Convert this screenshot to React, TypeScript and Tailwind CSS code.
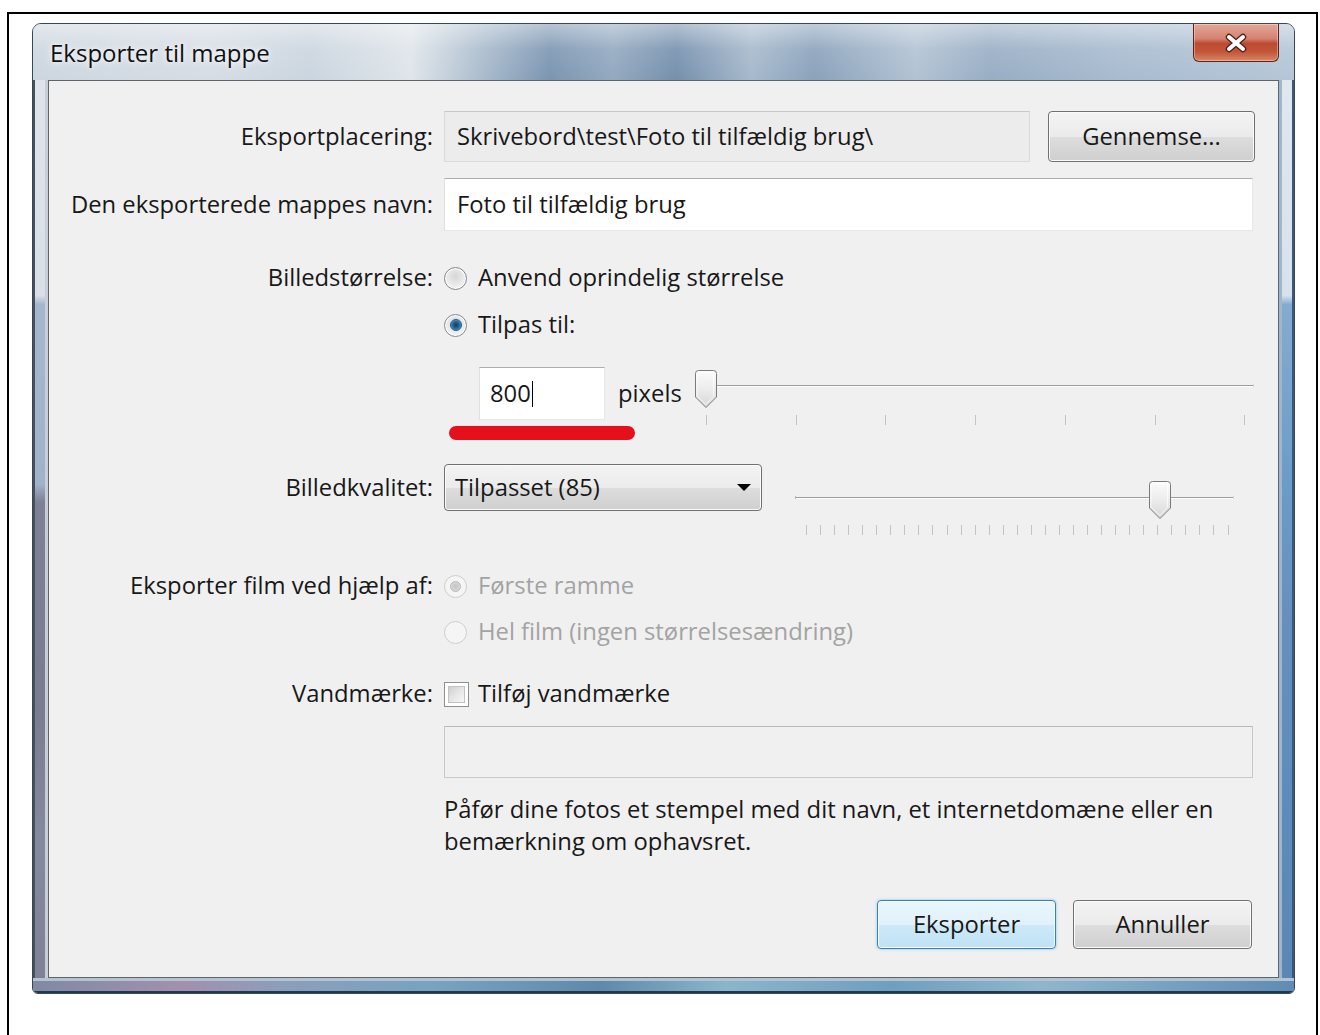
import type { ReactNode } from "react";

// Vista style radio button
function Radio({ checked, disabled }: { checked?: boolean; disabled?: boolean }) {
  if (disabled) {
    return (
      <span className="flex h-[23px] w-[23px] shrink-0 items-center justify-center rounded-full border border-[#cdcdcd] bg-[#f5f5f5]">
        {checked && (
          <span className="h-[11px] w-[11px] rounded-full border border-[#b8b8b8] bg-[radial-gradient(circle_at_50%_45%,#c4c4c4_0%,#d8d8d8_70%,#e6e6e6_100%)]" />
        )}
      </span>
    );
  }
  return (
    <span className="flex h-[23px] w-[23px] shrink-0 items-center justify-center rounded-full border border-[#85878a] bg-[radial-gradient(circle_at_50%_40%,#d6d6d6_0%,#e9e9e9_50%,#ffffff_100%)] shadow-[inset_0_0_0_1px_#ffffff]">
      {checked && (
        <span className="h-[12px] w-[12px] rounded-full border border-[#1d5a86] bg-[radial-gradient(circle_at_50%_50%,#17395c_0%,#276a9a_50%,#7ccaf0_100%)]" />
      )}
    </span>
  );
}

function Checkbox() {
  return (
    <span className="flex h-[25px] w-[25px] shrink-0 items-center justify-center border border-[#8e8f8f] bg-white">
      <span className="h-[17px] w-[17px] border border-[#c2c2c2] bg-[linear-gradient(135deg,#cfcfcf_0%,#e6e6e6_50%,#f7f7f7_100%)]" />
    </span>
  );
}

// slider thumb pointing down, drawn at (x, y) top-left
function Thumb({ x, y }: { x: number; y: number }) {
  return (
    <g transform={`translate(${x} ${y})`}>
      <path
        d="M3.5 0.5 H18.5 A3 3 0 0 1 21.5 3.5 V27 L11 37.5 L0.5 27 V3.5 A3 3 0 0 1 3.5 0.5 Z"
        fill="url(#thumbFill)"
        stroke="#7b7b7b"
        strokeWidth="1"
      />
      <path d="M3.5 2 H18.5 V26 L11 34.5 L2 26 V3.5" fill="none" stroke="#ffffff" strokeOpacity="0.7" />
    </g>
  );
}

function Slider({
  width,
  height,
  trackY,
  trackFrom,
  trackTo,
  thumbX,
  thumbY,
  ticks,
  tickY,
  tickH,
}: {
  width: number;
  height: number;
  trackY: number;
  trackFrom: number;
  trackTo: number;
  thumbX: number;
  thumbY: number;
  ticks: number[];
  tickY: number;
  tickH: number;
}) {
  return (
    <svg width={width} height={height} className="block overflow-visible">
      <defs>
        <linearGradient id="thumbFill" x1="0" y1="0" x2="0" y2="1">
          <stop offset="0" stopColor="#fbfbfb" />
          <stop offset="0.5" stopColor="#ececec" />
          <stop offset="1" stopColor="#d6d6d6" />
        </linearGradient>
      </defs>
      {ticks.map((t) => (
        <line key={t} x1={t + 0.5} x2={t + 0.5} y1={tickY} y2={tickY + tickH} stroke="#c4c4c4" strokeWidth="1" />
      ))}
      <line x1={trackFrom} x2={trackTo} y1={trackY + 0.5} y2={trackY + 0.5} stroke="#9c9c9c" strokeWidth="1" />
      <line x1={trackFrom} x2={trackTo} y1={trackY + 1.5} y2={trackY + 1.5} stroke="#ffffff" strokeWidth="1" />
      <line x1={trackFrom + 0.5} x2={trackFrom + 0.5} y1={trackY - 1} y2={trackY + 2} stroke="#b8b8b8" />
      <line x1={trackTo - 0.5} x2={trackTo - 0.5} y1={trackY - 1} y2={trackY + 2} stroke="#d6d6d6" />
      <Thumb x={thumbX} y={thumbY} />
    </svg>
  );
}

function Row({ label, children, className }: { label?: string; children: ReactNode; className: string }) {
  return (
    <div className={`grid grid-cols-[384px_1fr] items-center gap-x-[11px] ${className}`}>
      <div className="whitespace-nowrap text-right">{label}</div>
      <div className="flex h-full items-center">{children}</div>
    </div>
  );
}

const sizeTicks = Array.from({ length: 7 }, (_, i) => Math.round(13 + i * 89.7));
const qualityTicks = Array.from({ length: 31 }, (_, i) => Math.round(20 + i * 14.05));

const grayButton =
  "flex items-center justify-center rounded-[4px] border border-[#707070] bg-[linear-gradient(180deg,#f3f3f3_0%,#ebebeb_50%,#dddddd_51%,#cfcfcf_100%)] shadow-[inset_0_0_0_1px_#fbfbfb]";

export default function App() {
  return (
    <div className="h-[1035px] w-[1320px] overflow-hidden bg-white font-['Open_Sans','Noto_Sans',sans-serif] text-[23.8px] leading-none text-[#181818]">
      <div className="ml-[7px] mt-[12px] h-[1040px] w-[1311px] border-2 border-b-0 border-black pl-[23px] pt-[9px]">
        {/* window */}
        <div className="flex h-[971px] w-[1263px] flex-col overflow-hidden rounded-t-[9px] rounded-b-[6px] border border-[#36475a] bg-[#a9bbce]">
          {/* title bar */}
          <div className="flex h-[56px] shrink-0 items-start bg-[linear-gradient(180deg,rgba(255,255,255,0.45)_0%,rgba(255,255,255,0.1)_45%,rgba(255,255,255,0)_100%),linear-gradient(90deg,#cdd6df_0%,#d6dde5_14%,#cbd5df_22%,#dfe5ea_30%,#a7b9cb_36%,#7b95b1_41%,#93a9c0_46%,#7590ad_51%,#a7b9cc_57%,#8aa2bb_62%,#b2c2d3_70%,#98adc4_76%,#a8bbcf_86%,#b5c6d7_100%)]">
            <div className="pl-[17px] pt-[15px] text-[24px] leading-[28px] text-[#111] [text-shadow:0_0_10px_rgba(255,255,255,0.95),0_0_4px_rgba(255,255,255,0.8)]">
              Eksporter til mappe
            </div>
            <div className="ml-auto mr-[15px] flex h-[38px] w-[86px] items-center justify-center rounded-b-[6px] border border-t-0 border-[#5c241c] bg-[linear-gradient(180deg,#e3a797_0%,#d48270_40%,#bd4a31_52%,#c2553a_75%,#db8762_100%)] shadow-[inset_0_0_0_1px_rgba(255,255,255,0.35)]">
              <svg width="24" height="20" viewBox="0 0 24 20">
                <path d="M5 4 L19 16 M19 4 L5 16" stroke="#4f2019" strokeWidth="6.5" strokeLinecap="round" />
                <path d="M5 4 L19 16 M19 4 L5 16" stroke="#ffffff" strokeWidth="4" strokeLinecap="round" />
              </svg>
            </div>
          </div>

          <div className="flex flex-1">
            {/* left frame */}
            <div className="w-[15px] shrink-0 bg-[linear-gradient(180deg,#dfe4eb_0%,#d9dfe7_24%,#a3b7ce_25%,#9fb4cb_45%,#7e8196_47%,#7a7c90_70%,#868a9e_85%,#7f8296_100%)] shadow-[inset_-3px_0_0_#c9ced6,inset_2px_0_0_#4a4f5c]" />

            {/* client area */}
            <div className="flex flex-1 flex-col border border-[#5f646b] bg-[#f0f0f0] pr-[25px]">
              <Row label="Eksportplacering:" className="mt-[30px] h-[51px]">
                <div className="flex h-full w-[586px] items-center border border-[#dadada] border-t-[#c8c8c8] bg-[#ececec] pl-[12px]">
                  Skrivebord\test\Foto til tilfældig brug\
                </div>
                <button className={`ml-auto mr-[-2px] h-[51px] w-[207px] ${grayButton}`}>Gennemse...</button>
              </Row>

              <Row label="Den eksporterede mappes navn:" className="mt-[16px] h-[53px]">
                <div className="flex h-full w-full items-center border border-[#e3e9ef] border-l-[#dbdfe6] border-t-[#abadb3] bg-white pl-[12px]">
                  Foto til tilfældig brug
                </div>
              </Row>

              <Row label="Billedstørrelse:" className="mt-[30px] h-[34px]">
                <Radio />
                <span className="ml-[11px]">Anvend oprindelig størrelse</span>
              </Row>

              <Row className="mt-[13px] h-[34px]">
                <Radio checked />
                <span className="ml-[11px]">Tilpas til:</span>
              </Row>

              <Row className="mt-[25px] h-[53px]">
                <div className="ml-[35px] flex h-[53px] w-[126px] items-center border border-[#e3e9ef] border-l-[#dbdfe6] border-t-[#abadb3] bg-white pl-[10px]">
                  800
                  <span className="ml-[1px] h-[26px] w-[1px] bg-black" />
                </div>
                <span className="ml-[13px]">pixels</span>
                <div className="ml-auto mr-[-2px] h-[53px] self-start">
                  <Slider
                    width={562}
                    height={62}
                    trackY={18}
                    trackFrom={13}
                    trackTo={561}
                    thumbX={2}
                    thumbY={3}
                    ticks={sizeTicks}
                    tickY={48}
                    tickH={10}
                  />
                </div>
              </Row>

              <Row className="mt-[6px] h-[14px]">
                <div className="ml-[5px] h-[14px] w-[186px] rounded-full bg-[#e5101b]" />
              </Row>

              <Row label="Billedkvalitet:" className="mt-[24px] h-[47px]">
                <div className={`h-[47px] w-[318px] !justify-start pl-[10px] ${grayButton}`}>
                  Tilpasset (85)
                  <svg width="14" height="8" className="ml-auto mr-[10px]">
                    <path d="M0 0 H14 L7 7 Z" fill="#000" />
                  </svg>
                </div>
                <div className="ml-[24px] h-[47px] self-start">
                  <Slider
                    width={455}
                    height={76}
                    trackY={33}
                    trackFrom={9}
                    trackTo={448}
                    thumbX={363}
                    thumbY={17}
                    ticks={qualityTicks}
                    tickY={61}
                    tickH={10}
                  />
                </div>
              </Row>

              <Row label="Eksporter film ved hjælp af:" className="mt-[58px] h-[34px]">
                <Radio checked disabled />
                <span className="ml-[11px] text-[#a3a3a3]">Første ramme</span>
              </Row>

              <Row className="mt-[12px] h-[34px]">
                <Radio disabled />
                <span className="ml-[11px] text-[#a3a3a3]">Hel film (ingen størrelsesændring)</span>
              </Row>

              <Row label="Vandmærke:" className="mt-[28px] h-[34px]">
                <Checkbox />
                <span className="ml-[9px]">Tilføj vandmærke</span>
              </Row>

              <Row className="mt-[15px] h-[52px]">
                <div className="h-full w-full border border-[#c9c9c9] border-t-[#b9b9b9] bg-[#f0f0f0]" />
              </Row>

              <Row className="mt-[15px]">
                <p className="whitespace-nowrap leading-[32px]">
                  Påfør dine fotos et stempel med dit navn, et internetdomæne eller en
                  <br />
                  bemærkning om ophavsret.
                </p>
              </Row>

              <div className="mt-[43px] flex justify-end gap-[17px]">
                <button className="flex h-[49px] w-[179px] items-center justify-center rounded-[4px] border border-[#3c7fb1] bg-[linear-gradient(180deg,#eaf6fd_0%,#e0f1fb_50%,#cde9f8_51%,#bfe2f5_100%)] shadow-[inset_0_0_0_1px_#f4fbff,0_0_3px_#7ec4ea]">
                  Eksporter
                </button>
                <button className={`mr-[1px] h-[49px] w-[179px] ${grayButton}`}>Annuller</button>
              </div>
            </div>

            {/* right frame */}
            <div className="w-[15px] shrink-0 bg-[linear-gradient(180deg,#dfe7ef_0%,#d6e2ec_24%,#84abcf_25%,#6b9cc6_45%,#6690bb_60%,#5d8cbc_80%,#5b87b3_100%)] shadow-[inset_3px_0_0_#9fb7cc,inset_-2px_0_0_#3c5a78]" />
          </div>

          {/* bottom frame */}
          <div className="h-[15px] shrink-0 bg-[linear-gradient(90deg,#7f8aa3_0%,#a48fae_12%,#8a9fbc_20%,#77a3c1_32%,#5f89aa_45%,#8ab6cc_55%,#6f9ebf_68%,#8fb6cd_80%,#5f8cb5_100%)] shadow-[inset_0_3px_0_#b4c3d2,inset_0_-2px_0_#22384f]" />
        </div>
      </div>
    </div>
  );
}
